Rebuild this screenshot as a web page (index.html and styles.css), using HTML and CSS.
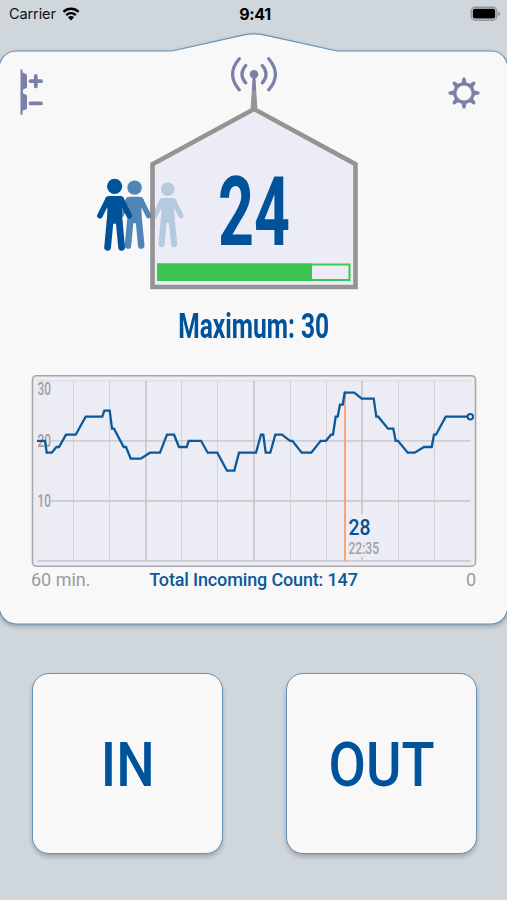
FILE: index.html
```html
<!DOCTYPE html>
<html lang="en">
<head>
  <meta charset="UTF-8" />
  <meta name="viewport" content="width=device-width, initial-scale=1" />
  <title>People Counter</title>
  <link rel="stylesheet" href="styles.css">
</head>
<body>
  <div class="status-bar">
    <div class="carrier">
      <span>Carrier</span>
      <svg width="18" height="14" viewBox="0 0 18 14">
        <path d="M1.4 4.9a11 11 0 0 1 15.2 0" fill="none" stroke="#000" stroke-width="2.5"/>
        <path d="M4.2 8.1a6.9 6.9 0 0 1 9.6 0" fill="none" stroke="#000" stroke-width="2.3"/>
        <path d="M9 13.6l-3.1-3.3a4.4 4.4 0 0 1 6.2 0z"/>
      </svg>
    </div>
    <div class="time">9:41</div>
    <svg class="battery" width="31" height="16" viewBox="0 0 31 16">
      <rect x="1.2" y="1.2" width="25.6" height="13" rx="4" fill="none" stroke="#8f959b" stroke-width="1.4"/>
      <rect x="2.8" y="2.8" width="22.4" height="9.8" rx="2"/>
      <path d="M28.3 5.4c2.7 1 2.7 3.8 0 4.8z" fill="#8f959b"/>
    </svg>
  </div>

  <main class="card">
    <svg class="card-shape" width="507" height="600" viewBox="0 33 507 600">
      <path d="M-1 66Q3 51 17 51H172L243 35.200Q254 32.400 265 35.200L337 51H491Q504 51 508 66V609Q504 624 491 624H17Q3 624-1 609Z" fill="#f8f8f8" stroke="#6592b9" stroke-width="1.200"/>
    </svg>

    <div class="top">
      <svg class="door-icon" width="25" height="48" viewBox="19 68 25 48" fill="#7b80a8">
        <path d="M20.500 69.500h2v3l3 1.200q1.500 .5 1.500 1.500v12q0 1-1.500 1.400l-2.500 1v4l2.500 1q1.500 .4 1.500 1.400v12q0 1-1.500 1.500l-3 1.200v4h-2z"/>
        <path d="M30.500 81.200h10.600M35.800 75.900v10.600M30.500 103.400h10.600" fill="none" stroke="#7b80a8" stroke-width="3.700" stroke-linecap="round"/>
      </svg>

      <svg class="house" width="320" height="240" viewBox="94 52 320 240">
        <path d="M152.500 164.200L254 109L355.500 164.200V287H152.500Z" fill="#ebecf5" stroke="#949494" stroke-width="4.600"/>
        <path d="M252.700 76h2.600l2 32h-6.600z" fill="#949494"/>
        <path d="M253 76h2l1 14h-4z" fill="#7b80a8"/>
        <circle cx="254" cy="74.300" r="4.300" fill="#7b80a8"/>
        <g fill="none" stroke="#7b80a8" stroke-width="3.200" stroke-linecap="round">
          <path d="M245.700 65.500q-7.500 8.700 0 17.400M239.300 58.700q-13.500 15.600 0 31.200M262.300 65.500q7.500 8.700 0 17.400M268.700 58.700q13.500 15.600 0 31.200"/>
        </g>

        <defs>
          <g id="person">
            <circle cx="0" cy="-28.500" r="7.600" stroke="none"/>
            <path d="M-5.500-18.800H5.500Q8.500-18.800 9.500-16L7.200-6L7.800 9H-7.800L-7.200-6L-9.500-16Q-8.500-18.800-5.500-18.800Z" stroke="none"/>
            <path d="M-6.500-15.500L-14.700 1M6.500-15.500L14.700 1" fill="none" stroke-width="5.600" stroke-linecap="round"/>
            <path d="M-4.500 6L-7 32.500M4.500 6L7 32.500" fill="none" stroke-width="6.800" stroke-linecap="round"/>
          </g>
        </defs>
        <use href="#person" class="person far" transform="translate(167.800 214.900) scale(.9)"/>
        <path d="M152.500 205v22" stroke="#949494" stroke-width="4.600"/>
        <use href="#person" class="person mid" transform="translate(134.600 214.700) scale(.95)"/>
        <use href="#person" class="person near" transform="translate(114.600 214.800)"/>

        <text class="count" x="218" y="245" textLength="72" lengthAdjust="spacingAndGlyphs">24</text>

        <rect x="158" y="264.500" width="191.500" height="15.500" fill="#ebecf5" stroke="#3dc552" stroke-width="2"/>
        <rect x="157" y="263.500" width="155" height="17.500" fill="#3dc552"/>
      </svg>

      <svg class="gear-icon" width="34" height="34" viewBox="-17 -17 34 34" fill="#7b80a8" stroke="#7b80a8">
        <defs>
          <path id="tooth" d="M-1.800-10L-.8-14.700H.8L1.800-10Z" stroke-width="1.400" stroke-linejoin="round"/>
        </defs>
        <circle r="9.200" fill="none" stroke-width="3.200"/>
        <use href="#tooth"/>
        <use href="#tooth" transform="rotate(45)"/>
        <use href="#tooth" transform="rotate(90)"/>
        <use href="#tooth" transform="rotate(135)"/>
        <use href="#tooth" transform="rotate(180)"/>
        <use href="#tooth" transform="rotate(225)"/>
        <use href="#tooth" transform="rotate(270)"/>
        <use href="#tooth" transform="rotate(315)"/>
      </svg>
    </div>

    <div class="maximum"><span>Maximum: 30</span></div>

    <svg class="chart" width="446" height="193" viewBox="31 374 446 193">
      <rect x="32.500" y="375.700" width="443" height="190.500" rx="4" fill="#ebecf4" stroke="#a8a8aa" stroke-width="1.600"/>
      <path d="M37.500 381H471" stroke="#f3cfd5"/>
      <path d="M73.500 381v180M109.500 381v180M181.500 381v180M217.500 381v180M290.500 381v180M326.500 381v180M398.500 381v180M434.500 381v180" stroke="#d3d3d8"/>
      <path d="M146 381v180M254 381v180M362 381v133M362 557v4" stroke="#bdbdc1" stroke-width="1.300"/>
      <path d="M51 440.800H470.500M51 501H470.500M37.500 561H470.500" stroke="#c3c3c7" stroke-width="1.300"/>
      <g class="axis">
        <text x="37.500" y="394.500" textLength="13.500" lengthAdjust="spacingAndGlyphs">30</text>
        <text x="37.500" y="447" textLength="13.500" lengthAdjust="spacingAndGlyphs">20</text>
        <text x="37.500" y="507.200" textLength="13.500" lengthAdjust="spacingAndGlyphs">10</text>
      </g>
      <path d="M345 391V561" stroke="#f6a679" stroke-width="2"/>
      <polyline fill="none" stroke="#0d5898" stroke-width="2.300" points="37,440.800 45,440.800 46.700,452.700 51.700,452.700 56.500,447 59,447 66,434.700 75.700,434.700 85.700,416.700 102.300,416.700 104.300,410.700 109.700,410.700 112,428.700 114,428.700 123.700,447 126,447 130.700,458.700 140.700,458.700 150,452.700 160,452.700 167,434.700 174,434.700 179,447 186.700,447 188.700,440.800 201,440.800 207.700,452.700 217.300,452.700 227,470.700 234.300,470.700 239,452.700 256,452.700 261,434.700 263.300,434.700 265.700,452.700 270.300,452.700 275.300,434.700 282,434.700 290,440.800 292.300,440.800 301.700,452.700 311.300,452.700 320.700,440.800 326,440.800 331,434.700 333,434.700 335.700,416.700 337.700,416.700 340,404.700 342.700,404.700 344.700,392.700 354.300,392.700 361.700,398.700 373.700,398.700 376.300,416.700 378.300,416.700 388,428.700 393.300,428.700 395.700,440.800 398,440.800 407.700,452.700 414.700,452.700 424,447 431.700,447 434,434.700 436,434.700 445.700,416.700 468,416.700"/>
      <circle cx="470.300" cy="416.800" r="2.700" fill="#ebecf4" stroke="#0d5898" stroke-width="2"/>
      <text class="peak" x="348.500" y="534.500" textLength="22" lengthAdjust="spacingAndGlyphs">28</text>
      <text class="peak-time" x="348.500" y="553.500" textLength="30.500" lengthAdjust="spacingAndGlyphs">22:35</text>
    </svg>

    <div class="legend">
      <span class="from">60 min.</span>
      <span class="total">Total Incoming Count: 147</span>
      <span class="to">0</span>
    </div>
  </main>

  <div class="buttons">
    <button class="btn"><span>IN</span></button>
    <button class="btn"><span>OUT</span></button>
  </div>
</body>
</html>
```

FILE: styles.css
```css
* {
  box-sizing: border-box;
}
body {
  margin: 0;
  height: 900px;
  background: #cfd6dc;
  font-family: Roboto, 'Liberation Sans', sans-serif;
  overflow: hidden;
}
svg {
  display: block;
  flex-shrink: 0;
}
.status-bar {
  display: grid;
  grid-template-columns: 1fr auto 1fr;
  align-items: center;
  height: 33px;
  padding: 0 6px 6px 9px;
  font-family: Inter, sans-serif;
  color: #111;
}
.carrier {
  display: flex;
  align-items: center;
  gap: 6px;
  font-size: 14.5px;
  letter-spacing: -0.1px;
}
.time {
  font-size: 16px;
  font-weight: 700;
  letter-spacing: -0.3px;
  color: #000;
}
.battery {
  justify-self: end;
}
.card {
  position: relative;
  height: 591px;
}
.card-shape {
  position: absolute;
  top: 0;
  left: 0;
  z-index: -1;
  filter: drop-shadow(0 2px 2px rgba(0,0,0,0.25));
}
.top {
  display: flex;
  justify-content: space-between;
  align-items: flex-start;
  height: 259px;
  padding: 19px 26px 0 19px;
}
.door-icon {
  margin-top: 16px;
}
.house {
  margin-left: 16px;
}
.gear-icon {
  margin-top: 24px;
}
.person.near {
  fill: #00529b;
  stroke: #00529b;
}
.person.mid {
  fill: #4f86b6;
  stroke: #4f86b6;
}
.person.far {
  fill: #b5cadf;
  stroke: #b5cadf;
}
.count {
  font-size: 97px;
  font-weight: 700;
  fill: #00529b;
}
.maximum {
  display: flex;
  justify-content: center;
  height: 82px;
  padding-top: 14px;
  font-size: 35px;
  line-height: 41px;
  font-weight: 700;
  color: #00529b;
}
.maximum span {
  transform: scaleX(0.7);
}
.chart {
  margin-left: 31px;
}
.axis {
  font-size: 17.5px;
  font-weight: 500;
  fill: #a0a0a2;
}
.peak {
  font-size: 22px;
  font-weight: 500;
  fill: #00529b;
}
.peak-time {
  font-size: 16px;
  font-weight: 500;
  fill: #a0a0a0;
}
.legend {
  display: grid;
  grid-template-columns: 1fr auto 1fr;
  padding: 2px 31px 0;
  font-size: 18px;
  line-height: 22px;
  color: #9b9b9b;
}
.total {
  font-weight: 500;
  letter-spacing: -0.15px;
  color: #0d5898;
}
.to {
  text-align: right;
}
.buttons {
  display: flex;
  justify-content: space-between;
  padding: 49px 30px 0 32px;
}
.btn {
  width: 191px;
  height: 181px;
  padding: 2px 0 0;
  border: 1px solid #6592b9;
  border-radius: 17px;
  background: #f8f8f8;
  box-shadow: 0 3px 4px rgba(0,0,0,0.22);
  font-family: inherit;
  font-size: 62px;
  font-weight: 500;
  color: #00529b;
}
.btn span {
  display: inline-block;
  transform: scaleX(0.875);
}
```
